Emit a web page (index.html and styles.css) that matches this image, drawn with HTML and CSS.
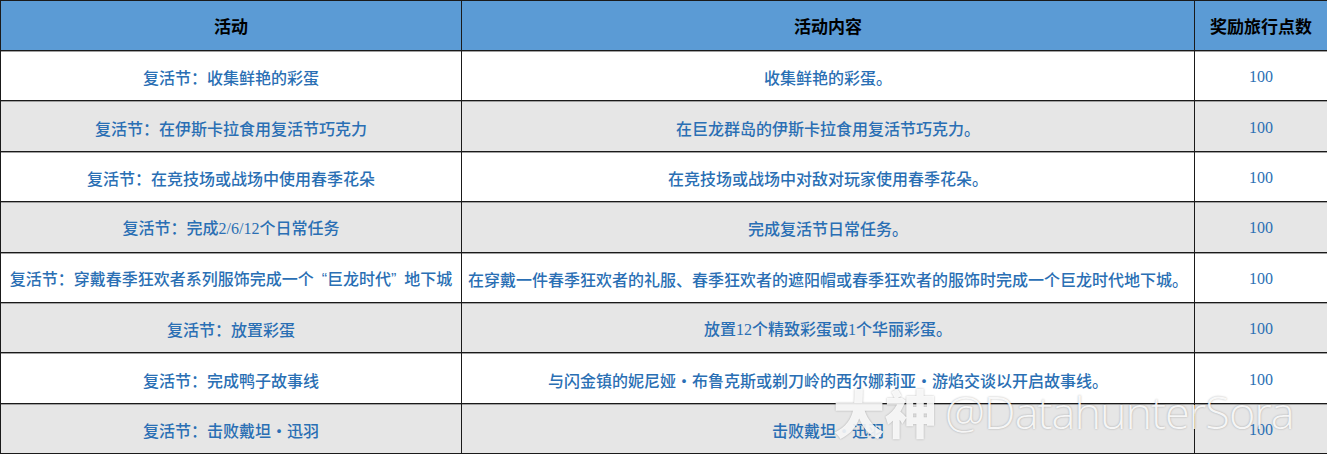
FILE: index.html
```html
<!DOCTYPE html>
<html lang="zh-CN">
<head>
<meta charset="utf-8">
<link rel="stylesheet" href="styles.css">
</head>
<body>
<div class="page">
<table class="grid">
  <colgroup>
    <col class="c1"><col class="c2"><col class="c3">
  </colgroup>
  <thead>
    <tr class="head">
      <th>活动</th><th>活动内容</th><th>奖励旅行点数</th>
    </tr>
  </thead>
  <tbody>
    <tr class="odd"><td>复活节：收集鲜艳的彩蛋</td><td>收集鲜艳的彩蛋。</td><td class="num">100</td></tr>
    <tr class="even"><td>复活节：在伊斯卡拉食用复活节巧克力</td><td>在巨龙群岛的伊斯卡拉食用复活节巧克力。</td><td class="num">100</td></tr>
    <tr class="odd"><td>复活节：在竞技场或战场中使用春季花朵</td><td>在竞技场或战场中对敌对玩家使用春季花朵。</td><td class="num">100</td></tr>
    <tr class="even"><td>复活节：完成<span class="lat">2/6/12</span>个日常任务</td><td>完成复活节日常任务。</td><td class="num">100</td></tr>
    <tr class="odd"><td>复活节：穿戴春季狂欢者系列服饰完成一个<span class="q ql">“</span>巨龙时代<span class="q qr">”</span>地下城</td><td>在穿戴一件春季狂欢者的礼服、春季狂欢者的遮阳帽或春季狂欢者的服饰时完成一个巨龙时代地下城。</td><td class="num">100</td></tr>
    <tr class="even"><td>复活节：放置彩蛋</td><td>放置<span class="lat">12</span>个精致彩蛋或<span class="lat">1</span>个华丽彩蛋。</td><td class="num">100</td></tr>
    <tr class="odd"><td>复活节：完成鸭子故事线</td><td>与闪金镇的妮尼娅·布鲁克斯或剃刀岭的西尔娜莉亚·游焰交谈以开启故事线。</td><td class="num">100</td></tr>
    <tr class="even"><td>复活节：击败戴坦·迅羽</td><td>击败戴坦·迅羽</td><td class="num">100</td></tr>
  </tbody>
</table>
<div class="watermark"><span class="wm-cn">大神</span><span class="wm-en">@DatahunterSora</span></div>
</div>
</body>
</html>
```

FILE: styles.css
```css
html, body {
  margin: 0;
  padding: 0;
  background: #ffffff;
}
.page {
  position: relative;
  width: 1327px;
  height: 454px;
  overflow: hidden;
}
.grid {
  width: 1327px;
  border-collapse: collapse;
  table-layout: fixed;
  font-family: "Noto Sans CJK SC", sans-serif;
}
.c1 { width: 461px; }
.c2 { width: 733px; }
.c3 { width: 133px; }
.grid th, .grid td {
  border: 1px solid #1a1a1a;
  padding: 0;
  text-align: center;
  vertical-align: middle;
  white-space: nowrap;
  line-height: 20px;
}
.head {
  height: 50px;
}
.head th {
  background: #5b9bd5;
  color: #000;
  font-size: 17px;
  font-weight: bold;
}
tbody tr {
  height: 50.4px;
}
.grid td {
  font-size: 16px;
  font-weight: 500;
  color: #2a6fb4;
  padding-top: 3px;
  box-shadow: inset 0 1px 0 #a0a0a0;
}
.odd td { background: #ffffff; }
.even td { background: #e6e6e6; }
.lat {
  font-family: "Liberation Serif", serif;
  font-size: 16px;
}
.q {
  font-family: "Liberation Sans", sans-serif;
}
.ql { margin-left: 8px; }
.qr { margin-right: 8px; }
.num {
  font-family: "Liberation Serif", serif;
  font-size: 15px;
}
.watermark {
  position: absolute;
  left: 833px;
  top: 382px;
  display: flex;
  align-items: center;
  gap: 8px;
  color: rgba(255, 255, 255, 0.88);
  text-shadow: 0 0 2px rgba(0, 0, 0, 0.3);
  white-space: nowrap;
}
.wm-cn {
  font-family: "Noto Sans CJK SC", sans-serif;
  font-weight: 900;
  font-size: 52px;
  line-height: 60px;
}
.wm-en {
  font-family: "Open Sans", sans-serif;
  font-weight: 300;
  font-size: 45px;
  line-height: 60px;
  letter-spacing: -1px;
}
```
